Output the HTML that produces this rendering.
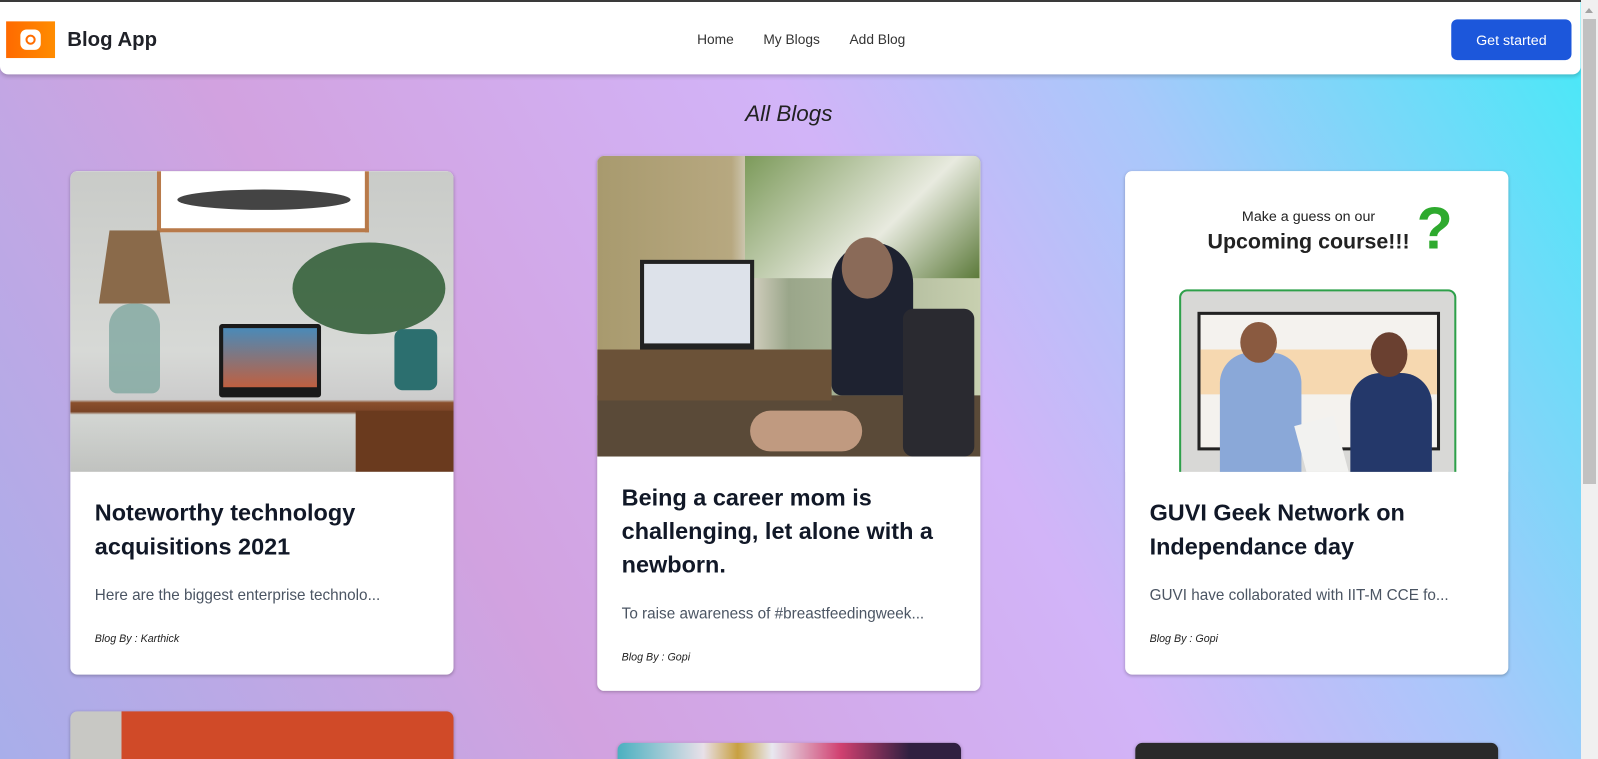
<!DOCTYPE html>
<html><head><meta charset="utf-8"><style>
*{box-sizing:border-box;margin:0;padding:0}
html,body{width:1598px;height:759px;overflow:hidden}
body{font-family:"Liberation Sans",sans-serif;position:relative;background:#f0f0f0}
#pg{position:absolute;left:0;top:0;width:1581px;height:759px;overflow:hidden;
background:linear-gradient(60deg,#a8aeea 0%,#d2a2e0 30%,#d2b4f8 58%,#a8c8fa 75%,#44eaf8 100%);border-top:2px solid #3a3a3a}
#in{position:absolute;left:0;top:0;width:1551px;height:743px;overflow:hidden;transform:scale(1.01913);transform-origin:0 0}
#sb{position:absolute;left:1581px;top:0;width:17px;height:759px;background:#f0f0f0}
#sb .th{position:absolute;left:2px;top:19px;width:13px;height:465px;background:#c1c1c1}
#sb .ar{position:absolute;left:4px;top:8px;width:0;height:0;border-left:4px solid transparent;border-right:4px solid transparent;border-bottom:5px solid #a3a3a3}
header{position:absolute;left:0;top:0;width:1551px;height:71px;background:#fff;border-radius:0 0 8px 8px;box-shadow:0 2px 4px rgba(0,0,0,.2)}
.logo{position:absolute;left:6px;top:19px;width:48px;height:36px;background:linear-gradient(90deg,#ff6a00,#ff8c00)}
.logo i{position:absolute;left:14px;top:8px;width:20px;height:20px;background:#fff;border-radius:6px}
.logo i:after{content:"";position:absolute;left:5px;top:5px;width:10px;height:10px;border-radius:50%;border:2.5px solid #ff6d00;box-sizing:border-box}
.brand{position:absolute;left:66px;top:26px;font-size:20px;font-weight:bold;color:#1f2128}
nav{position:absolute;top:29px;left:684px;font-size:13.5px;color:#333}
nav span{margin-right:29px}
.btn{position:absolute;left:1424px;top:17px;width:118px;height:40px;background:#1c57db;color:#fff;border-radius:6px;font-size:14px;text-align:center;line-height:40px}
h1{position:absolute;left:0;width:1548px;text-align:center;top:97px;font-size:22px;font-style:italic;font-weight:normal;color:#222}
.card{position:absolute;width:376px;background:#fff;border-radius:7px;overflow:hidden;box-shadow:0 1px 3px rgba(0,0,0,.25)}
.img{width:100%;height:295px;position:relative;overflow:hidden}
.card h2{font-size:23px;line-height:33px;color:#111827;font-weight:bold;margin:24px 24px 0 24px}
.card p{font-size:15px;color:#4b5563;margin:23px 24px 0}
.card .by{font-size:10.5px;font-style:italic;color:#222;margin:28px 24px 0}
.abs{position:absolute}
</style></head><body>
<div id="pg"><div id="in">
<header>
<div class="logo"><i></i></div>
<div class="brand">Blog App</div>
<nav><span>Home</span><span>My Blogs</span><span>Add Blog</span></nav>
<div class="btn">Get started</div>
</header>
<h1>All Blogs</h1>

<div class="card" style="left:69px;top:166px;height:494px">
<div class="img" style="background:linear-gradient(180deg,#c9cbc8 0%,#d7d9d6 60%,#ccc 76%,#8a4f2c 77%,#7a4426 80%,#d3d6d3 81%,#c0c2bf 100%)">
<div class="abs" style="left:85px;top:0;width:208px;height:60px;background:#fff;border:4px solid #b87a4a;border-top:0"><div class="abs" style="left:16px;top:18px;width:170px;height:20px;background:#444;border-radius:50%"></div></div>
<div class="abs" style="left:28px;top:58px;width:70px;height:72px;background:#8a6a4a;clip-path:polygon(15% 0,85% 0,100% 100%,0 100%)"></div>
<div class="abs" style="left:38px;top:130px;width:50px;height:88px;background:#7fa8a0;border-radius:22px 22px 8px 8px;opacity:.8"></div>
<div class="abs" style="left:146px;top:150px;width:100px;height:72px;background:#1a1a1a;border-radius:3px"><div class="abs" style="left:4px;top:4px;width:92px;height:58px;background:linear-gradient(#4a8ab8,#c06040)"></div></div>
<div class="abs" style="left:218px;top:70px;width:150px;height:90px;background:#2d5a32;border-radius:50%;opacity:.85"></div>
<div class="abs" style="left:318px;top:155px;width:42px;height:60px;background:#2c6f6f;border-radius:8px"></div>
<div class="abs" style="left:280px;top:235px;width:96px;height:60px;background:#6a3a1e"></div>
</div>
<h2>Noteworthy technology acquisitions 2021</h2>
<p>Here are the biggest enterprise technolo...</p>
<div class="by">Blog By : Karthick</div>
</div>

<div class="card" style="left:586px;top:151px;height:525px">
<div class="img" style="background:linear-gradient(90deg,#a89a6e 0%,#b7a880 35%,#d4d0c0 40%,#9aa68a 50%,#c8d0b0 100%)">
<div class="abs" style="left:145px;top:0;width:230px;height:120px;background:linear-gradient(135deg,#7c9a5a,#e8eadf 60%,#5c7a3a)"></div>
<div class="abs" style="left:42px;top:102px;width:112px;height:90px;background:#222"><div class="abs" style="left:4px;top:4px;width:104px;height:78px;background:#dde2ea"></div></div>
<div class="abs" style="left:0;top:235px;width:376px;height:60px;background:#5a4a38"></div>
<div class="abs" style="left:0;top:190px;width:230px;height:50px;background:#6b5238"></div>
<div class="abs" style="left:230px;top:85px;width:80px;height:150px;background:#1e2230;border-radius:40px 40px 10px 10px"></div>
<div class="abs" style="left:240px;top:80px;width:50px;height:60px;background:#8a6a58;border-radius:50%"></div>
<div class="abs" style="left:300px;top:150px;width:70px;height:145px;background:#2a2a30;border-radius:10px"></div>
<div class="abs" style="left:150px;top:250px;width:110px;height:40px;background:#c09a80;border-radius:20px"></div>
</div>
<h2>Being a career mom is challenging, let alone with a newborn.</h2>
<p>To raise awareness of #breastfeedingweek...</p>
<div class="by">Blog By : Gopi</div>
</div>

<div class="card" style="left:1104px;top:166px;height:494px">
<div class="img" style="background:#fff">
<div class="abs" style="left:30px;top:36px;width:300px;text-align:center;font-size:14px;color:#222">Make a guess on our</div>
<div class="abs" style="left:30px;top:58px;width:300px;text-align:center;font-size:21px;font-weight:bold;color:#222">Upcoming course!!!</div>
<div class="abs" style="left:286px;top:28px;font-size:58px;font-weight:bold;color:#2eaa2e;line-height:1">?</div>
<div class="abs" style="left:53px;top:116px;width:272px;height:190px;border:2px solid #2ea04a;border-radius:8px;background:#d8d8d6;overflow:hidden">
<div class="abs" style="left:16px;top:20px;width:238px;height:136px;background:#f4f2ee;border:3px solid #222"><div class="abs" style="left:0;top:34px;width:232px;height:44px;background:#f6d8b0"></div></div>
<div class="abs" style="left:38px;top:60px;width:80px;height:130px;background:#8aa8d8;border-radius:30px 30px 0 0"></div>
<div class="abs" style="left:58px;top:30px;width:36px;height:40px;background:#8a5a40;border-radius:50%"></div>
<div class="abs" style="left:166px;top:80px;width:80px;height:110px;background:#24386a;border-radius:30px 30px 0 0"></div>
<div class="abs" style="left:186px;top:40px;width:36px;height:44px;background:#6a4030;border-radius:50%"></div>
<div class="abs" style="left:118px;top:126px;width:40px;height:60px;background:#f2f2f0;transform:rotate(-15deg)"></div>
</div>
</div>
<h2>GUVI Geek Network on Independance day</h2>
<p>GUVI have collaborated with IIT-M CCE fo...</p>
<div class="by">Blog By : Gopi</div>
</div>

<div class="card" style="left:69px;top:696px;height:80px;background:linear-gradient(90deg,#c8c8c4 0 50px,#d04a28 50px)"></div>
<div class="card" style="left:606px;top:727px;width:337px;height:60px;background:linear-gradient(90deg,#4ab0c0,#e8e0e8 25%,#c8a040 35%,#e8e8f0 45%,#d04070 65%,#302040 85%)"></div>
<div class="card" style="left:1114px;top:727px;width:356px;height:60px;background:#2a2a2a"></div>
</div></div>
<div id="sb"><div class="ar"></div><div class="th"></div></div>
</body></html>
